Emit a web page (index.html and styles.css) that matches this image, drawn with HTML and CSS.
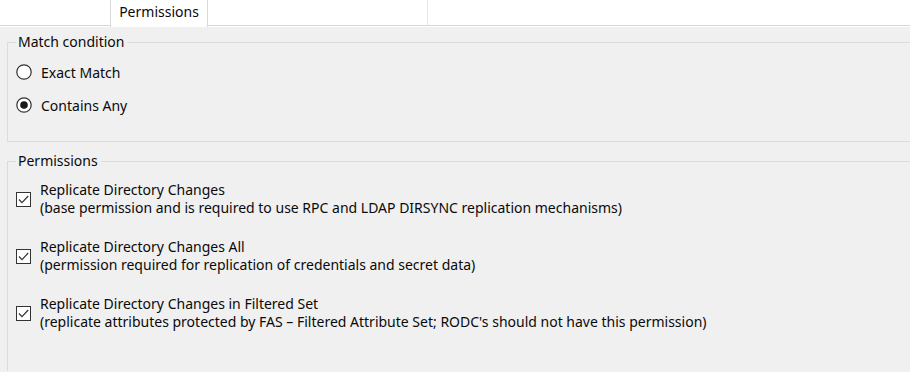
FILE: index.html
```html
<!DOCTYPE html>
<html>
<head>
<meta charset="utf-8">
<link rel="stylesheet" href="styles.css">
</head>
<body>
<div class="tabstrip">
  <div class="tab-lead"></div>
  <div class="tab tab-active">Permissions</div>
  <div class="tab tab-empty"></div>
  <div class="tab-rest"></div>
</div>
<div class="content">
  <fieldset class="group group-match">
    <legend>Match condition</legend>
    <div class="radio-row">
      <svg class="radio" viewBox="0 0 16 16" width="16" height="16"><circle cx="8" cy="8" r="7.2" fill="#fff" stroke="#333" stroke-width="1.2"/></svg>
      <span>Exact Match</span>
    </div>
    <div class="radio-row">
      <svg class="radio" viewBox="0 0 16 16" width="16" height="16"><circle cx="8" cy="8" r="7.2" fill="#fff" stroke="#333" stroke-width="1.2"/><circle cx="8" cy="8" r="3.8" fill="#1a1a1a"/></svg>
      <span>Contains Any</span>
    </div>
  </fieldset>
  <fieldset class="group group-perms">
    <legend>Permissions</legend>
    <div class="check-row">
      <svg class="check" viewBox="0 0 15 15" width="15" height="15"><rect x="0.5" y="0.5" width="14" height="14" fill="#fff" stroke="#333"/><polyline points="3,7.5 6,10.6 12.2,4" fill="none" stroke="#333" stroke-width="1.2"/></svg>
      <div class="check-text">
        <div>Replicate Directory Changes</div>
        <div>(base permission and is required to use RPC and LDAP DIRSYNC replication mechanisms)</div>
      </div>
    </div>
    <div class="check-row">
      <svg class="check" viewBox="0 0 15 15" width="15" height="15"><rect x="0.5" y="0.5" width="14" height="14" fill="#fff" stroke="#333"/><polyline points="3,7.5 6,10.6 12.2,4" fill="none" stroke="#333" stroke-width="1.2"/></svg>
      <div class="check-text">
        <div>Replicate Directory Changes All</div>
        <div>(permission required for replication of credentials and secret data)</div>
      </div>
    </div>
    <div class="check-row">
      <svg class="check" viewBox="0 0 15 15" width="15" height="15"><rect x="0.5" y="0.5" width="14" height="14" fill="#fff" stroke="#333"/><polyline points="3,7.5 6,10.6 12.2,4" fill="none" stroke="#333" stroke-width="1.2"/></svg>
      <div class="check-text">
        <div>Replicate Directory Changes in Filtered Set</div>
        <div>(replicate attributes protected by FAS – Filtered Attribute Set; RODC's should not have this permission)</div>
      </div>
    </div>
  </fieldset>
</div>
</body>
</html>
```
FILE: styles.css
```css
html, body {
  margin: 0;
  padding: 0;
  height: 100%;
}
body {
  background: #f0f0f0;
  font-family: "Noto Sans", "Open Sans", sans-serif;
  font-size: 14px;
  color: #0a0a0a;
  overflow: hidden;
}
.tabstrip {
  display: flex;
  height: 27px;
  background: #fff;
}
.tab-lead {
  width: 110px;
  height: 25px;
  border-bottom: 1px solid #d6d6d6;
}
.tab {
  box-sizing: border-box;
  height: 27px;
}
.tab-active {
  width: 98px;
  border-left: 1px solid #d9d9d9;
  border-right: 1px solid #d9d9d9;
  text-align: center;
  line-height: 24px;
  background: #fff;
}
.tab-empty {
  width: 220px;
  height: 26px;
  border-right: 1px solid #e6e6e6;
  border-bottom: 1px solid #d6d6d6;
}
.tab-rest {
  flex: 1;
  height: 26px;
  border-bottom: 1px solid #d6d6d6;
  box-sizing: border-box;
}
.content {
  padding-left: 7px;
}
.group {
  margin: 0;
  border: 1px solid #dcdcdc;
  border-right: none;
  padding: 0 0 0 8px;
}
.group legend {
  padding: 0 3px 0 2px;
  line-height: 16px;
}
.group-match {
  margin-top: 7px;
  padding-top: 12px;
  padding-bottom: 26px;
  display: flex;
  flex-direction: column;
  gap: 13px;
}
.radio-row {
  display: flex;
  align-items: center;
  height: 20px;
  gap: 9px;
}
.radio {
  flex: none;
}
.group-perms {
  margin-top: 11px;
  padding-top: 12px;
  padding-bottom: 40px;
  border-bottom: none;
  display: flex;
  flex-direction: column;
  gap: 21px;
}
.check-row {
  display: flex;
  align-items: center;
  gap: 9px;
}
.check {
  flex: none;
}
.check-text {
  line-height: 18px;
}
```
